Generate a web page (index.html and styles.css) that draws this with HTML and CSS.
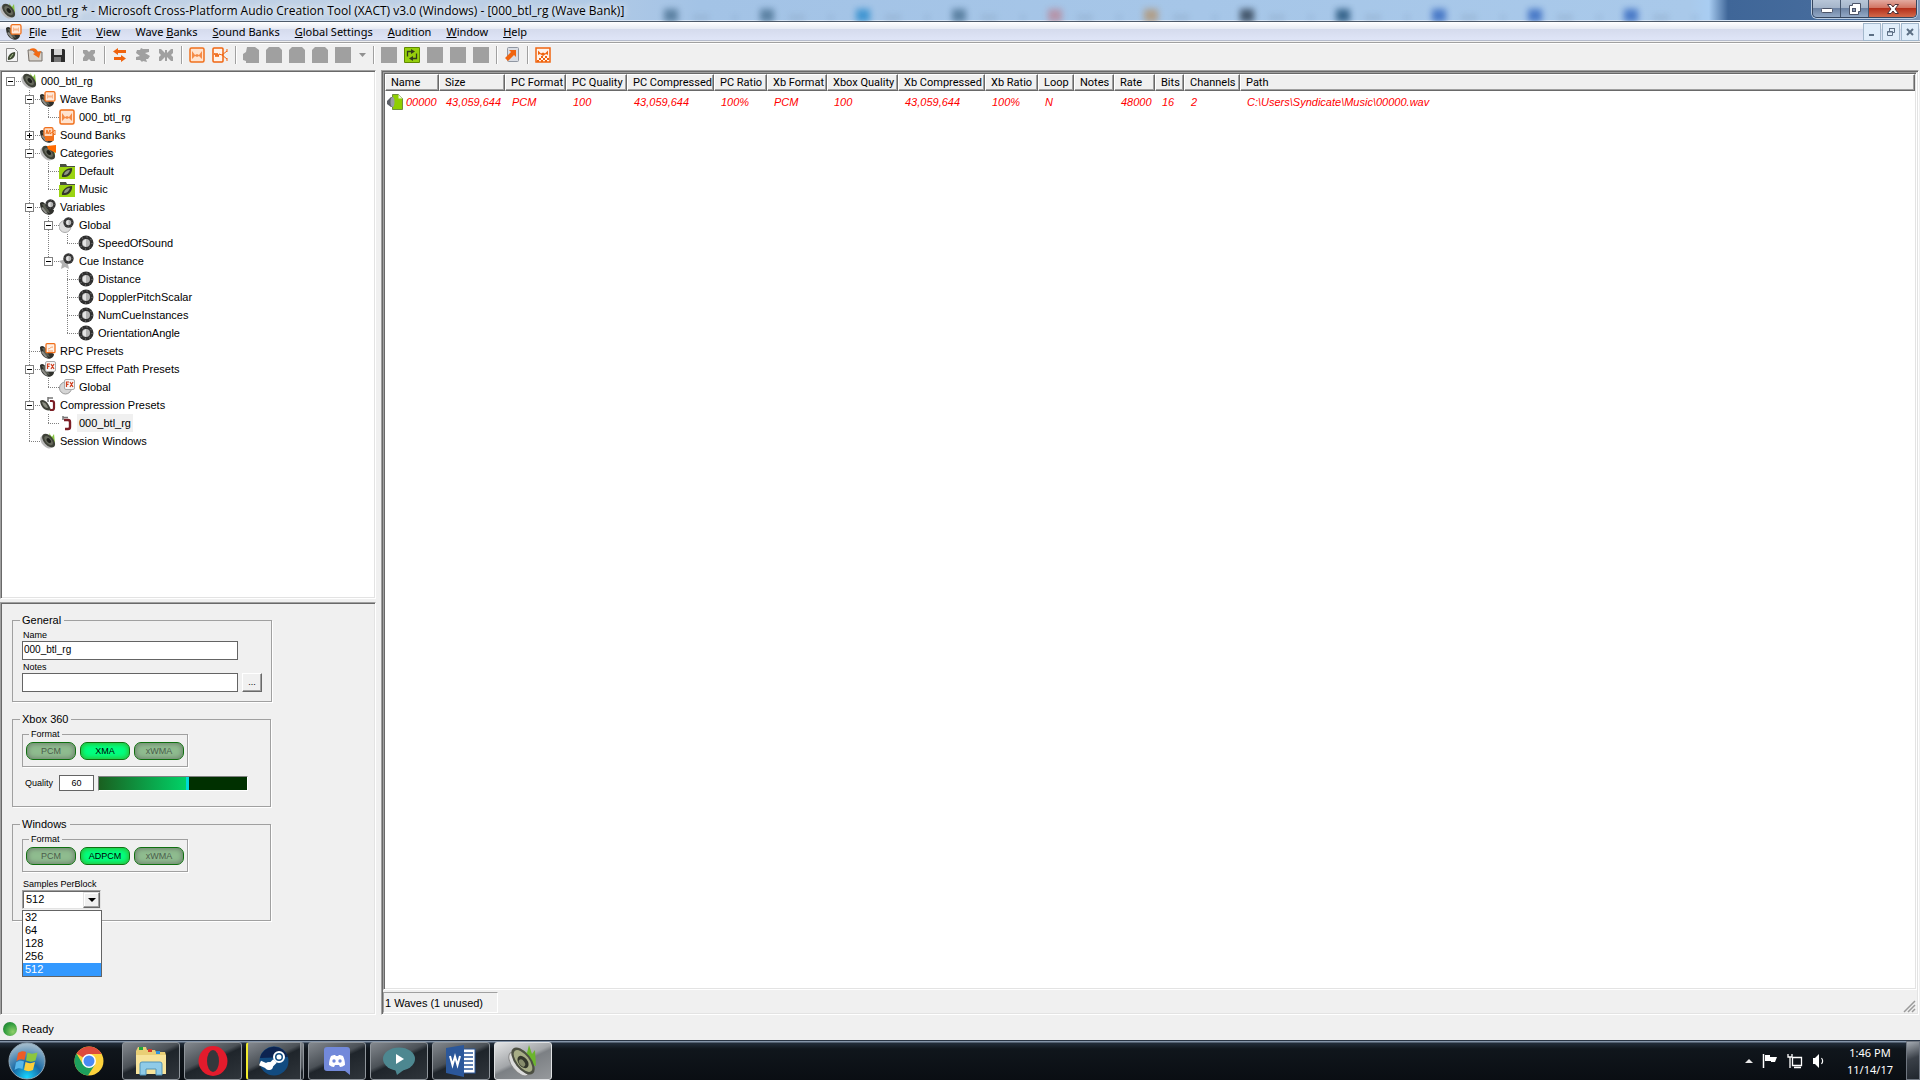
FILE: index.html
```
<!DOCTYPE html>
<html lang="en">
<head>
    <meta charset="UTF-8">
    <meta name="viewport" content="width=device-width, initial-scale=1.0">
    <title>000_btl_rg * - Microsoft Cross-Platform Audio Creation Tool (XACT) v3.0 (Windows)</title>
    <link rel="stylesheet" href="styles.css">
</head>
<body>
    <!-- Shared icon shapes -->
    <svg class="sprite" width="0" height="0">
        <symbol id="speaker" viewBox="0 0 16 16">
            <path d="M9 0l3 4 2-3 1 9-4-2z" fill="#86c440"/>
            <ellipse cx="6.500" cy="9" rx="4.600" ry="7.600" transform="rotate(-42 6.500 9)" fill="#b9b9b9"/>
            <ellipse cx="8.600" cy="7.600" rx="4.600" ry="8.200" transform="rotate(-42 8.600 7.600)" fill="#3f4238"/>
            <ellipse cx="8.600" cy="7.600" rx="2.900" ry="5.600" transform="rotate(-42 8.600 7.600)" fill="#66695c"/>
            <ellipse cx="8.800" cy="7.600" rx="1.800" ry="2.800" transform="rotate(-42 8.800 7.600)" fill="#1d1f1a"/>
        </symbol>
        <symbol id="cone" viewBox="0 0 16 16">
            <path d="M0 4c2-2 4-1 6 2l8 5c0 4-5 6-8 4C2 13 0 9 0 4z" fill="#2f302c"/>
            <path d="M2 5l4 8 4 1-5-9z" fill="#5a5d52"/>
            <path d="M1 9l4 5 3 1-5-7z" fill="#8d8d88"/>
        </symbol>
        <symbol id="wave" viewBox="0 0 16 16">
            <rect x="1" y="1" width="14" height="14" rx="1.500" fill="#ffe3cf" stroke="#f0701c" stroke-width="1.500"/>
            <path d="M3 4v8l3-3 2 1 2-1 3 3V4l-3 4-2-1-2 1z" fill="#f58a45"/>
        </symbol>
        <symbol id="wavebank" viewBox="0 0 16 16">
            <use href="#cone"/>
            <rect x="5" y=".7" width="10" height="9.500" rx="1.500" fill="#ffe9da" stroke="#f0701c" stroke-width="1.300"/>
            <path d="M7 3v5l2-2 1 1 1-1 2 2V3l-2 2-1-1-1 1z" fill="#f9b48a"/>
        </symbol>
        <symbol id="soundbank" viewBox="0 0 16 16">
            <use href="#cone"/>
            <rect x="5" y="6" width="9" height="8" rx="1.500" fill="#f0701c"/>
            <rect x="4" y=".7" width="9" height="9" rx="1.500" fill="#ffd9be" stroke="#f0701c" stroke-width="1.300"/>
            <path d="M6 7l1-4 1 4 2-4v4l5-4v5l-3-3" fill="none" stroke="#f0701c"/>
        </symbol>
        <symbol id="categories" viewBox="0 0 16 16">
            <use href="#speaker"/>
            <path d="M7 1l9-1v8L8 4z" fill="#ff6a00"/>
        </symbol>
        <symbol id="category" viewBox="0 0 16 16">
            <path d="M1 1h6l1 2h8v4H1z" fill="#4a4f40"/>
            <rect x="0" y="4" width="16" height="12" fill="#9bd411"/>
            <path d="M3 14c-1-4 4-9 10-9 1 4-3 9-7 9z" fill="#33372a"/>
            <path d="M5 12c0-3 3-5 6-5-1 3-3 5-6 5z" fill="#8f9584"/>
        </symbol>
        <symbol id="knob" viewBox="0 0 16 16">
            <circle cx="8" cy="8" r="7.500" fill="#303030"/>
            <circle cx="8" cy="8" r="6" fill="none" stroke="#aaa" stroke-width="1" stroke-dasharray=".8 3.900"/>
            <circle cx="8" cy="8" r="4" fill="#b4b4b4"/>
            <path d="M5 6l3-2v8l-3-2z" fill="#e4e4e4"/>
        </symbol>
        <symbol id="variables" viewBox="0 0 16 16">
            <use href="#cone"/>
            <use href="#knob" x="5" y="0" width="11" height="11"/>
        </symbol>
        <symbol id="globalvar" viewBox="0 0 16 16">
            <circle cx="6" cy="9.500" r="6" fill="#ddd" stroke="#aaa"/>
            <use href="#knob" x="4" y="0" width="11" height="11"/>
        </symbol>
        <symbol id="cuevar" viewBox="0 0 16 16">
            <path d="M6 3l2 4 4 1-3 3 1 5-4-2-4 2 1-5-3-3 4-1z" fill="#b2b2b2"/>
            <use href="#knob" x="4" y="0" width="11" height="11"/>
        </symbol>
        <symbol id="rpc" viewBox="0 0 16 16">
            <use href="#cone"/>
            <rect x="6" y=".7" width="9" height="9" rx="1" fill="#fff1e6" stroke="#f0701c" stroke-width="1.300"/>
            <path d="M8 6c2 0 2-2 5-2M8 8h5" fill="none" stroke="#f5a068"/>
        </symbol>
        <symbol id="fx" viewBox="0 0 16 16">
            <rect x="5.500" y=".5" width="10" height="10" rx="1.500" fill="#f6f6f6" stroke="#aaa"/>
            <path d="M7.500 8V3H10M7.500 5.300h2M11 3l3 5M14 3l-3 5" fill="none" stroke="#cf3c1b" stroke-width="1.200"/>
        </symbol>
        <symbol id="dsp" viewBox="0 0 16 16">
            <use href="#cone"/>
            <use href="#fx"/>
        </symbol>
        <symbol id="dspglobal" viewBox="0 0 16 16">
            <circle cx="6.500" cy="9" r="6" fill="#d5d5d5" stroke="#999"/>
            <use href="#fx"/>
        </symbol>
        <symbol id="clamp" viewBox="0 0 16 16">
            <path d="M4 1v4M4 2.500h5" stroke="#777" stroke-width="1.500" fill="none"/>
            <path d="M5 5h4q2 0 2 2v5q0 2-2 2H6" stroke="#7c1f26" stroke-width="2.400" fill="none"/>
        </symbol>
        <symbol id="compression" viewBox="0 0 16 16">
            <path d="M0 4c3-3 8 0 11 9-5 2-10-2-11-9z" fill="#3f4238"/>
            <path d="M2 5c3 0 5 2 6 6-3 0-5-2-6-6z" fill="#8a8d80"/>
            <path d="M8 0v5M8 1h5" stroke="#777" stroke-width="1.500" fill="none"/>
            <path d="M10 4h2q2 0 2 2v5q0 2-2 2h-2" stroke="#7c1f26" stroke-width="2.200" fill="none"/>
        </symbol>
    </svg>

    <header class="titlebar">
        <div class="glass-tabs">
            <i></i><i></i><i></i><i></i><i></i><i></i><i></i><i></i><i></i><i></i><i></i>
        </div>
        <svg class="icon"><use href="#speaker"/></svg>
        <h1 class="title">000_btl_rg * - Microsoft Cross-Platform Audio Creation Tool (XACT) v3.0 (Windows) - [000_btl_rg (Wave Bank)]</h1>
        <div class="window-buttons">
            <button type="button" aria-label="Minimize">
                <svg width="14" height="14" viewBox="0 0 14 14"><rect x="1.500" y="6.500" width="11" height="4" rx="1" fill="#fff" stroke="#4c5468"/></svg>
            </button>
            <button type="button" aria-label="Restore">
                <svg width="14" height="14" viewBox="0 0 14 14"><path d="M4.500 1.500h8v8h-2v3h-9v-9h3z" fill="#fff" stroke="#4c5468"/><rect x="4.500" y="6.500" width="3" height="3" fill="#8c9ab5" stroke="#4c5468"/></svg>
            </button>
            <button type="button" class="close" aria-label="Close">
                <svg width="14" height="14" viewBox="0 0 14 14"><path d="M1.500 2.500h3.500l2 2.500 2-2.500h3.500L9 7l3.500 4.500H9L7 9l-2 2.500H1.500L5 7z" fill="#fff" stroke="#4c3038"/></svg>
            </button>
        </div>
    </header>

    <nav class="menubar">
        <svg class="icon"><use href="#wavebank"/></svg>
        <button type="button"><u>F</u>ile</button>
        <button type="button"><u>E</u>dit</button>
        <button type="button"><u>V</u>iew</button>
        <button type="button">Wave <u>B</u>anks</button>
        <button type="button"><u>S</u>ound Banks</button>
        <button type="button"><u>G</u>lobal Settings</button>
        <button type="button"><u>A</u>udition</button>
        <button type="button"><u>W</u>indow</button>
        <button type="button"><u>H</u>elp</button>
        <div class="mdi-buttons">
            <button type="button" aria-label="Minimize document"><svg width="10" height="10"><path d="M2 8h5" stroke="#5c6f84" stroke-width="2"/></svg></button>
            <button type="button" aria-label="Restore document"><svg width="10" height="10"><path d="M3.500 4V1.500h5v4H7M3 1.500h6M1.500 4.500h5v4h-5zM1 5h6" fill="none" stroke="#5c6f84"/></svg></button>
            <button type="button" aria-label="Close document"><svg width="10" height="10"><path d="M2 2l6 6M8 2L2 8" stroke="#5c6f84" stroke-width="2"/></svg></button>
        </div>
    </nav>

    <div class="toolbar">
        <button type="button" aria-label="New"><svg viewBox="0 0 16 16"><path d="M2.500 1.500h8l3 3v10h-11z" fill="#f4f4f4" stroke="#8b8b8b"/><path d="M4 13c-1-4 3-8 7-8 1 4-2 8-7 8z" fill="#3f4a33"/><path d="M6 11l3-4" stroke="#a9c58e"/></svg></button>
        <button type="button" aria-label="Open"><svg viewBox="0 0 16 16"><path d="M1 3h5l1 2h8v9H2z" fill="#d8d2c9" stroke="#77706a"/><path d="M3 2c4-2 7 0 8 3l3-1-2 7-6-4 2-1C7 4 6 3 3 3z" fill="#f26a12"/></svg></button>
        <button type="button" aria-label="Save"><svg viewBox="0 0 16 16"><path d="M1 2h13l1 1v12H1z" fill="#2c2c2c"/><rect x="4" y="2" width="8" height="6" fill="#d4d4d4"/><rect x="4" y="10" width="7" height="5" fill="#777"/></svg></button>
        <span class="sep"></span>
        <button type="button" disabled aria-label="Delete"><svg viewBox="0 0 16 16"><path d="M2 3h4l2 2 2-2h4v3l-2 2 2 3v3h-4l-2-2-2 2H2v-3l2-3-2-2z" fill="#a0a0a0"/></svg></button>
        <span class="sep"></span>
        <button type="button" aria-label="Swap"><svg viewBox="0 0 16 16"><path d="M6 1v2h8v3H6v2L1 4.500zM9 8v2H2v3h7v2l5-3.500z" fill="#f0640f"/></svg></button>
        <button type="button" disabled aria-label="Sync"><svg viewBox="0 0 16 16"><path d="M6 1l2 1h6v3l-4 1 5 3-2 3h-2l1 3-4-1-1 1-2-2H1v-3l4-1-4-3 1-3h3z" fill="#a0a0a0"/></svg></button>
        <button type="button" disabled aria-label="Merge"><svg viewBox="0 0 16 16"><path d="M1 2h2l4 4V3h2v3l4-4h2v4l-2 2 2 2v4h-2L9 10v4H7v-4l-4 4H1v-4l2-2-2-2z" fill="#a0a0a0"/></svg></button>
        <span class="sep"></span>
        <button type="button" aria-label="New wave bank"><svg><use href="#wave"/></svg></button>
        <button type="button" aria-label="New sound bank"><svg viewBox="0 0 16 16"><rect x="1" y="1" width="10" height="14" rx="1" fill="#fff3ea" stroke="#f0640f" stroke-width="1.500"/><path d="M2 8l1-2 1 4 1-4 1 4 1-3 3 1 5-4M10 8l5 4M15 2v3M15 11v3" fill="none" stroke="#f0640f"/></svg></button>
        <span class="sep"></span>
        <button type="button" disabled aria-label="Play cue"><svg viewBox="0 0 16 16"><path d="M4 0h8l4 3v13H3v-2L0 13V7l3-2z" fill="#a0a0a0"/></svg></button>
        <button type="button" disabled aria-label="Play"><svg viewBox="0 0 16 16"><path d="M3 0h10l3 3v13H0V3z" fill="#a0a0a0"/></svg></button>
        <button type="button" disabled aria-label="Pause"><svg viewBox="0 0 16 16"><path d="M3 0h10l3 3v13H0V3z" fill="#a0a0a0"/></svg></button>
        <button type="button" disabled aria-label="Stop"><svg viewBox="0 0 16 16"><path d="M3 0h10l3 3v13H0V3z" fill="#a0a0a0"/></svg></button>
        <button type="button" disabled aria-label="View"><svg viewBox="0 0 16 16"><path d="M0 0h16v16H0z" fill="#a0a0a0"/></svg></button>
        <button type="button" class="drop" aria-label="View options"><svg viewBox="0 0 16 16"><path d="M5 6h7l-3.500 4z" fill="#909090"/></svg></button>
        <span class="sep"></span>
        <button type="button" disabled aria-label="Audition one"><svg viewBox="0 0 16 16"><path d="M0 0h16v16H0z" fill="#a0a0a0"/></svg></button>
        <button type="button" aria-label="Loop"><svg viewBox="0 0 16 16"><rect width="16" height="16" rx="1" fill="#5f8a00"/><rect x="1" y="1" width="14" height="14" fill="#96cf0c"/><path d="M7 4.500H3.500v5M9 11.500h3.500v-5" fill="none" stroke="#333c1c" stroke-width="1.300"/><path d="M7 2l4 2.500L7 7zM9 9l-4 2.500L9 14z" fill="#333c1c"/></svg></button>
        <button type="button" disabled aria-label="Audition two"><svg viewBox="0 0 16 16"><path d="M0 0h16v16H0z" fill="#a0a0a0"/></svg></button>
        <button type="button" disabled aria-label="Audition three"><svg viewBox="0 0 16 16"><path d="M0 0h16v16H0z" fill="#a0a0a0"/></svg></button>
        <button type="button" disabled aria-label="Audition four"><svg viewBox="0 0 16 16"><path d="M0 0h16v16H0z" fill="#a0a0a0"/></svg></button>
        <span class="sep"></span>
        <button type="button" aria-label="Export"><svg viewBox="0 0 16 16"><rect x="3.500" y=".5" width="11" height="14" rx="1" fill="#d9dde4" stroke="#9097a2"/><path d="M5 3h7v7l-2-2-6 6-3-3 6-6z" fill="#f0640f"/></svg></button>
        <span class="sep"></span>
        <button type="button" aria-label="Build"><svg viewBox="0 0 16 16"><rect x="1" y="1" width="14" height="14" fill="#fff3ea" stroke="#f0640f" stroke-width="1.500"/><path d="M3 3.500l3 3 2-1 2 1 3-3V8l-2-1-3 2-3-2-2 1zM6 9h2v2H6zM10 9h2v2h-2zM4 11h2v2H4zM8 11h2v2H8zM12 11h2v2h-2zM2 13h2v2H2zM6 13h2v2H6zM10 13h2v2h-2z" fill="#f0640f"/></svg></button>
    </div>

    <main class="workspace">
        <div class="sidebar">
            <section class="tree-panel">
                <ul class="tree">
                    <li class="root">
                        <div class="row"><button type="button" class="toggle" aria-label="Collapse"></button><svg class="icon"><use href="#speaker"/></svg><span class="label">000_btl_rg</span></div>
                        <ul>
                            <li>
                                <div class="row"><button type="button" class="toggle" aria-label="Collapse"></button><svg class="icon"><use href="#wavebank"/></svg><span class="label">Wave Banks</span></div>
                                <ul>
                                    <li><div class="row leaf"><svg class="icon"><use href="#wave"/></svg><span class="label">000_btl_rg</span></div></li>
                                </ul>
                            </li>
                            <li>
                                <div class="row"><button type="button" class="toggle plus" aria-label="Expand"></button><svg class="icon"><use href="#soundbank"/></svg><span class="label">Sound Banks</span></div>
                            </li>
                            <li>
                                <div class="row"><button type="button" class="toggle" aria-label="Collapse"></button><svg class="icon"><use href="#categories"/></svg><span class="label">Categories</span></div>
                                <ul>
                                    <li><div class="row leaf"><svg class="icon"><use href="#category"/></svg><span class="label">Default</span></div></li>
                                    <li><div class="row leaf"><svg class="icon"><use href="#category"/></svg><span class="label">Music</span></div></li>
                                </ul>
                            </li>
                            <li>
                                <div class="row"><button type="button" class="toggle" aria-label="Collapse"></button><svg class="icon"><use href="#variables"/></svg><span class="label">Variables</span></div>
                                <ul>
                                    <li>
                                        <div class="row"><button type="button" class="toggle" aria-label="Collapse"></button><svg class="icon"><use href="#globalvar"/></svg><span class="label">Global</span></div>
                                        <ul>
                                            <li><div class="row leaf"><svg class="icon"><use href="#knob"/></svg><span class="label">SpeedOfSound</span></div></li>
                                        </ul>
                                    </li>
                                    <li>
                                        <div class="row"><button type="button" class="toggle" aria-label="Collapse"></button><svg class="icon"><use href="#cuevar"/></svg><span class="label">Cue Instance</span></div>
                                        <ul>
                                            <li><div class="row leaf"><svg class="icon"><use href="#knob"/></svg><span class="label">Distance</span></div></li>
                                            <li><div class="row leaf"><svg class="icon"><use href="#knob"/></svg><span class="label">DopplerPitchScalar</span></div></li>
                                            <li><div class="row leaf"><svg class="icon"><use href="#knob"/></svg><span class="label">NumCueInstances</span></div></li>
                                            <li><div class="row leaf"><svg class="icon"><use href="#knob"/></svg><span class="label">OrientationAngle</span></div></li>
                                        </ul>
                                    </li>
                                </ul>
                            </li>
                            <li>
                                <div class="row leaf"><svg class="icon"><use href="#rpc"/></svg><span class="label">RPC Presets</span></div>
                            </li>
                            <li>
                                <div class="row"><button type="button" class="toggle" aria-label="Collapse"></button><svg class="icon"><use href="#dsp"/></svg><span class="label">DSP Effect Path Presets</span></div>
                                <ul>
                                    <li><div class="row leaf"><svg class="icon"><use href="#dspglobal"/></svg><span class="label">Global</span></div></li>
                                </ul>
                            </li>
                            <li>
                                <div class="row"><button type="button" class="toggle" aria-label="Collapse"></button><svg class="icon"><use href="#compression"/></svg><span class="label">Compression Presets</span></div>
                                <ul>
                                    <li><div class="row leaf"><svg class="icon"><use href="#clamp"/></svg><span class="label selected">000_btl_rg</span></div></li>
                                </ul>
                            </li>
                            <li>
                                <div class="row leaf"><svg class="icon"><use href="#speaker"/></svg><span class="label">Session Windows</span></div>
                            </li>
                        </ul>
                    </li>
                </ul>
            </section>

            <form class="properties">
                <fieldset class="group general">
                    <legend>General</legend>
                    <label for="name">Name</label>
                    <input id="name" class="text" type="text" value="000_btl_rg">
                    <label for="notes">Notes</label>
                    <div class="notes-row">
                        <input id="notes" class="text" type="text">
                        <button type="button" class="browse">...</button>
                    </div>
                </fieldset>

                <fieldset class="group xbox">
                    <legend>Xbox 360</legend>
                    <fieldset class="format">
                        <legend>Format</legend>
                        <button type="button" class="pill">PCM</button>
                        <button type="button" class="pill on">XMA</button>
                        <button type="button" class="pill">xWMA</button>
                    </fieldset>
                    <div class="quality-row">
                        <label for="quality">Quality</label>
                        <input id="quality" class="number" type="text" value="60">
                        <input class="meter" type="range" min="0" max="100" value="60" aria-label="Quality slider">
                    </div>
                </fieldset>

                <fieldset class="group windows">
                    <legend>Windows</legend>
                    <fieldset class="format">
                        <legend>Format</legend>
                        <button type="button" class="pill">PCM</button>
                        <button type="button" class="pill on">ADPCM</button>
                        <button type="button" class="pill">xWMA</button>
                    </fieldset>
                    <label class="block-label" for="samples">Samples PerBlock</label>
                    <div class="combo">
                        <select id="samples">
                            <option>32</option>
                            <option>64</option>
                            <option>128</option>
                            <option>256</option>
                            <option selected>512</option>
                        </select>
                        <span class="combo-arrow"></span>
                        <ul class="combo-list" role="listbox">
                            <li role="option">32</li>
                            <li role="option">64</li>
                            <li role="option">128</li>
                            <li role="option">256</li>
                            <li role="option" aria-selected="true">512</li>
                        </ul>
                    </div>
                </fieldset>
            </form>
        </div>

        <section class="document">
            <div class="wave-list">
                <table>
                    <colgroup>
                        <col class="w-name"><col class="w-size"><col class="w-format"><col class="w-format"><col class="w-comp"><col class="w-ratio"><col class="w-xformat"><col class="w-xquality"><col class="w-comp"><col class="w-ratio"><col class="w-loop"><col class="w-notes"><col class="w-rate"><col class="w-bits"><col class="w-channels"><col>
                    </colgroup>
                    <thead>
                        <tr>
                            <th>Name</th><th>Size</th><th>PC Format</th><th>PC Quality</th><th>PC Compressed</th><th>PC Ratio</th><th>Xb Format</th><th>Xbox Quality</th><th>Xb Compressed</th><th>Xb Ratio</th><th>Loop</th><th>Notes</th><th>Rate</th><th>Bits</th><th>Channels</th><th>Path</th>
                        </tr>
                    </thead>
                    <tbody>
                        <tr>
                            <td class="wave-name"><svg width="16" height="16" viewBox="0 0 16 16"><path d="M5.500.500h6l4 4v11h-10z" fill="#8fce00" stroke="#6f8f3c"/><path d="M11.500.500v4h4z" fill="#eef6dc"/><path d="M0 7l4-4h2v10H4L0 10z" fill="#5c5f66"/><ellipse cx="5.500" cy="8" rx="2" ry="5" fill="#9a9da3"/></svg>00000</td>
                            <td>43,059,644</td><td>PCM</td><td>100</td><td>43,059,644</td><td>100%</td><td>PCM</td><td>100</td><td>43,059,644</td><td>100%</td><td>N</td><td></td><td>48000</td><td>16</td><td>2</td><td>C:\Users\Syndicate\Music\00000.wav</td>
                        </tr>
                    </tbody>
                </table>
            </div>
            <footer class="doc-status">
                <span class="count">1 Waves (1 unused)</span>
                <svg class="grip" width="13" height="13"><path d="M1 12L12 1M5 12l7-7M9 12l3-3" stroke="#9a9a9a" stroke-width="1.500"/></svg>
            </footer>
        </section>
    </main>

    <footer class="statusbar"><span class="led"></span>Ready</footer>

    <div class="taskbar">
        <button type="button" class="start" aria-label="Start">
            <svg width="38" height="38" viewBox="0 0 38 38">
                <defs>
                    <radialGradient id="orb" cx=".5" cy=".95" r=".9"><stop offset="0" stop-color="#19d6ff"/><stop offset=".45" stop-color="#1769a5"/><stop offset="1" stop-color="#9fb9cb"/></radialGradient>
                </defs>
                <circle cx="19" cy="19" r="18" fill="url(#orb)" stroke="#93a9b8"/>
                <path d="M10 11c3-2 6-2 8-1l-1.500 8c-3-1-5-1-8 1z" fill="#ee5c26"/>
                <path d="M19.500 10.500c3 1.500 6 1.500 10 0L27.500 18.500c-3 1.500-6 1.500-9.500 0z" fill="#8cc63e"/>
                <path d="M8 20.500c3-2 5-2 8-1L14.500 27c-3-1-5-1-8 1z" fill="#57b7ea"/>
                <path d="M17.500 20c3 1.500 6 1.500 9.500 0L25 28c-3 1.500-6 1.500-9 0z" fill="#fccf3a"/>
            </svg>
        </button>
        <button type="button" class="pinned" aria-label="Chrome">
            <svg width="30" height="30" viewBox="0 0 30 30">
                <circle cx="15" cy="15" r="14.500" fill="#fdd23c"/>
                <path d="M15 15L2.500 7.600A14.500 14.500 0 0 1 27.600 8H15z" fill="#dd4a3c"/>
                <path d="M2.500 7.600A14.500 14.500 0 0 0 14 29.500L21 18.500 15 15 9 18.500z" fill="#1da05d"/>
                <circle cx="15" cy="15" r="7" fill="#fff"/><circle cx="15" cy="15" r="5.500" fill="#4a8af4"/>
            </svg>
        </button>
        <button type="button" class="task" aria-label="Explorer">
            <svg width="32" height="30" viewBox="0 0 32 30"><path d="M1 5l2-4h8l1 3h8l1 2h9l1 3v19H1z" fill="#e9cf75"/><path d="M1 9h30v19H1z" fill="#f7e39a"/><rect x="4" y="1" width="4" height="3" fill="#22a63c"/><rect x="13" y="3" width="4" height="3" fill="#d43a2a"/><rect x="21" y="5" width="4" height="3" fill="#2f93dc"/><path d="M5 29V18q0-2 2-2h18q2 0 2 2v11h-6v-6H11v6z" fill="#8fcbe8" stroke="#5294b8"/></svg>
        </button>
        <button type="button" class="task" aria-label="Opera">
            <svg width="30" height="32" viewBox="0 0 30 32"><ellipse cx="15" cy="16" rx="14.500" ry="15" fill="#e31b2c"/><ellipse cx="15" cy="16" rx="6" ry="11" fill="#33383c"/></svg>
        </button>
        <button type="button" class="task stacked" aria-label="Steam">
            <svg width="30" height="30" viewBox="0 0 30 30"><circle cx="15" cy="15" r="14.500" fill="#124b80"/><path d="M1 12A14.500 14.500 0 0 1 29 11z" fill="#0c2350"/><path d="M1 17l9 4 6-6" stroke="#fff" stroke-width="5" fill="none"/><circle cx="10" cy="20" r="4" fill="#fff"/><circle cx="20" cy="11" r="5" fill="#124b80" stroke="#fff" stroke-width="2"/><circle cx="20" cy="11" r="2.500" fill="#fff"/></svg>
        </button>
        <button type="button" class="task" aria-label="Discord">
            <svg width="28" height="30" viewBox="0 0 28 30"><path d="M4 1h20q3 0 3 3v25l-5-4H4q-3 0-3-3V4q0-3 3-3z" fill="#7289da"/><path d="M6 19c0-4 1-7 2-9 2-1 3-1 4-1l1 1h2l1-1c1 0 2 0 4 1 1 2 2 5 2 9-2 1-3 2-5 2l-1-2h-4l-1 2c-2 0-3-1-5-2z" fill="#fff"/><circle cx="11" cy="15" r="1.700" fill="#7289da"/><circle cx="17" cy="15" r="1.700" fill="#7289da"/></svg>
        </button>
        <button type="button" class="task" aria-label="Player">
            <svg width="34" height="28" viewBox="0 0 34 28"><ellipse cx="17" cy="12" rx="16" ry="11.500" fill="#4d8790"/><path d="M13 22l2 6 8-6z" fill="#4d8790"/><path d="M14 7l8 5-8 5z" fill="#fff"/></svg>
        </button>
        <button type="button" class="task" aria-label="Word">
            <svg width="30" height="32" viewBox="0 0 30 32"><rect x="16" y="4" width="13" height="24" fill="#fff" stroke="#2b579a"/><path d="M18 8h9M18 12h9M18 16h9M18 20h9M18 24h9" stroke="#2b579a" stroke-width="1.500"/><path d="M0 3l18-3v32L0 28z" fill="#2b579a"/><path d="M4 11l2.500 9L9 11.500 11.500 20 14 11" fill="none" stroke="#fff" stroke-width="2"/></svg>
        </button>
        <button type="button" class="task active" aria-label="XACT">
            <svg width="30" height="32" viewBox="0 0 30 32"><path d="M15 5l4 3 2-8 3 9 3-4 1 16-6-2z" fill="#6bb52c"/><ellipse cx="11" cy="19" rx="7" ry="14" transform="rotate(-38 11 19)" fill="#dcdcdc" stroke="#888"/><ellipse cx="15" cy="16" rx="8" ry="16" transform="rotate(-38 15 16)" fill="#4c4f42"/><ellipse cx="15" cy="16" rx="6" ry="13" transform="rotate(-38 15 16)" fill="#a7ad86"/><ellipse cx="15" cy="17" rx="4.500" ry="7" transform="rotate(-38 15 17)" fill="#33362b"/><ellipse cx="14" cy="18" rx="2.500" ry="4" transform="rotate(-38 14 18)" fill="#878c6c"/></svg>
        </button>

        <div class="tray">
            <svg width="8" height="16" viewBox="0 0 8 16"><path d="M0 10h8L4 6z" fill="#e8e8e8"/></svg>
            <svg width="16" height="16" viewBox="0 0 16 16"><path d="M1.500 1v14" stroke="#fff" stroke-width="1.500"/><path d="M3 2h5v2h7l-2 5H9V8H3z" fill="#fff"/></svg>
            <svg width="16" height="16" viewBox="0 0 16 16"><path d="M5.500 4.500h9v8h-9zM7 14.500h7M1 1v3h4V1M3 4v11" fill="none" stroke="#fff" stroke-width="1.300"/></svg>
            <svg width="14" height="16" viewBox="0 0 14 16"><path d="M1 5h2l4-4v14l-4-4H1z" fill="#fff"/><path d="M9.500 5c1.500 2 1.500 4 0 6" stroke="#fff" fill="none" stroke-width="1.200"/></svg>
            <div class="clock"><span>1:46 PM</span><span>11/14/17</span></div>
            <button type="button" class="show-desktop" aria-label="Show desktop"></button>
        </div>
    </div>
</body>
</html>
```
FILE: styles.css
```
* {
    margin: 0;
    padding: 0;
    box-sizing: border-box;
}

body {
    display: flex;
    flex-direction: column;
    height: 100vh;
    overflow: hidden;
    background: #f0f0f0;
    color: #000;
    font-family: "Liberation Sans", Arial, sans-serif;
    font-size: 11px;
    line-height: 14px;
}

button,
input,
select {
    font: inherit;
    color: inherit;
}

button {
    background: none;
    border: none;
}

ul {
    list-style: none;
}

.sprite {
    display: block;
    position: absolute;
}

.icon {
    width: 16px;
    height: 16px;
    flex: none;
}

/* Title bar */
.titlebar {
    position: relative;
    display: flex;
    align-items: center;
    height: 22px;
    flex: none;
    gap: 5px;
    overflow: hidden;
    background: linear-gradient(90deg, #c3d3e6 0, #bccfe5 500px, #a3c3e6 700px, #a9c9ea 88%, #a9cdf2 89%, #3f6698 90%, #4a6f9f 98%, #7f9bbd 100%);
    border-bottom: 1px solid #4d5a6b;
    box-shadow: inset 0 -1px 0 #d5e3f3;
}

.titlebar .icon {
    z-index: 1;
}

.title {
    z-index: 1;
    font-family: "Open Sans", "Noto Sans", sans-serif;
    font-size: 12px;
    font-weight: 400;
    white-space: nowrap;
    text-shadow: 0 0 6px #fff, 0 0 8px #fff;
}

/* Browser tabs seen through the glass */
.glass-tabs {
    position: absolute;
    top: 9px;
    left: 664px;
    right: 200px;
    display: flex;
    gap: 82px;
    filter: blur(3px);
    opacity: .8;
}

.glass-tabs i {
    width: 14px;
    height: 13px;
    flex: none;
    background: #4c7394;
    box-shadow: 26px 2px 0 -4px #90acca, 34px 2px 0 -4px #90acca, 64px 2px 0 -5px #819fc0;
}

.glass-tabs i:nth-child(3) { background: #2b8ccd; }
.glass-tabs i:nth-child(5) { background: #b98a9c; }
.glass-tabs i:nth-child(6) { background: #b39674; }
.glass-tabs i:nth-child(7) { background: #2e3e50; }
.glass-tabs i:nth-child(8) { background: #1f5078; }
.glass-tabs i:nth-child(n+9) { background: #3468c0; }

.window-buttons {
    display: flex;
    align-self: flex-start;
    margin-left: auto;
    margin-right: 3px;
    height: 18px;
    border: 1px solid #36465e;
    border-top: none;
    border-radius: 0 0 5px 5px;
    box-shadow: 0 0 0 1px #b9cbe0;
    overflow: hidden;
    z-index: 1;
}

.window-buttons button {
    display: flex;
    align-items: center;
    justify-content: center;
    width: 28px;
    background: linear-gradient(#b8c6d8, #a5b5ca 45%, #6d83a3 50%, #93a9c6);
    border-right: 1px solid #46566e;
}

.window-buttons .close {
    width: 47px;
    border-right: none;
    background: linear-gradient(#e3aaa0, #d27563 45%, #b5301b 50%, #d2694a);
}

/* Menu bar */
.menubar {
    display: flex;
    align-items: center;
    height: 20px;
    flex: none;
    padding-left: 6px;
    background: linear-gradient(#fff 0, #e6eaf4 7px, #d5dbed 7px, #dfe5f7 18px, #b6bccc 18px, #b6bccc 19px, #f0f0f0 19px);
    font-family: "Noto Sans", "Open Sans", sans-serif;
}

.menubar > button {
    padding: 0 8px 0 7px;
    white-space: nowrap;
}

.mdi-buttons {
    display: flex;
    gap: 1px;
    margin-left: auto;
    margin-right: 1px;
}

.mdi-buttons button {
    display: flex;
    align-items: center;
    justify-content: center;
    width: 18px;
    height: 18px;
    background: #e0edfa;
    border: 1px solid #a3b8cc;
}

/* Toolbar */
.toolbar {
    display: flex;
    align-items: center;
    height: 28px;
    flex: none;
    padding-bottom: 3px;
    border-top: 1px solid #a0a0a0;
    box-shadow: inset 0 1px 0 #fff;
}

.toolbar button {
    display: flex;
    align-items: center;
    justify-content: center;
    width: 23px;
    height: 22px;
}

.toolbar .drop {
    width: 15px;
}

.toolbar svg {
    width: 16px;
    height: 16px;
    flex: none;
}

.sep {
    width: 8px;
    height: 18px;
    background: linear-gradient(90deg, transparent 4px, #a0a0a0 4px, #a0a0a0 5px, #fff 5px, #fff 6px, transparent 6px);
}

/* Workspace */
.workspace {
    display: flex;
    flex: 1;
    min-height: 0;
    gap: 5px;
    padding-right: 1px;
}

.sidebar {
    display: flex;
    flex-direction: column;
    gap: 3px;
    width: 376px;
    flex: none;
}

.tree-panel,
.properties,
.document {
    border: 1px solid;
    border-color: #a0a0a0 #fff #fff #a0a0a0;
    box-shadow: inset 1px 1px 0 #696969, inset -1px -1px 0 #e3e3e3;
}

.tree-panel {
    flex: 1;
    min-height: 0;
    overflow: hidden;
    background: #fff;
    padding: 1px 2px 2px 5px;
}

.tree ul {
    margin-left: 19px;
}

.tree li {
    background: repeating-linear-gradient(#808080 0, #808080 1px, transparent 1px, transparent 2px) 4px 0 / 1px 100% no-repeat;
}

.tree li:last-child {
    background-size: 1px 9px;
}

.tree .root {
    background: none;
}

.row {
    display: flex;
    align-items: center;
    height: 18px;
    background: repeating-linear-gradient(90deg, #808080 0, #808080 1px, transparent 1px, transparent 2px) 4px 9px / 11px 1px no-repeat;
}

.leaf {
    padding-left: 15px;
}

.toggle {
    width: 9px;
    height: 9px;
    margin-right: 6px;
    border: 1px solid #808080;
    background: linear-gradient(#000, #000) center / 5px 1px no-repeat #fff;
}

.toggle.plus {
    background: linear-gradient(#000, #000) center / 5px 1px no-repeat, linear-gradient(#000, #000) center / 1px 5px no-repeat #fff;
}

.label {
    margin-left: 2px;
    padding: 1px 2px;
    line-height: 16px;
    white-space: nowrap;
}

.label.selected {
    background: #f0f0f0;
}

/* Properties */
.properties {
    display: flex;
    flex-direction: column;
    align-items: flex-start;
    gap: 10px;
    padding: 10px 10px 93px 11px;
    font-size: 9px;
    line-height: 11px;
}

.group {
    width: 259px;
    padding: 3px 9px 9px;
    border: 1px solid #a0a0a0;
    box-shadow: 1px 1px 0 #fff;
}

.group.xbox {
    padding-bottom: 15px;
}

.group.windows {
    padding-bottom: 11px;
}

.group > legend {
    margin-left: -2px;
    padding: 0 3px 0 2px;
    font-size: 11px;
    line-height: 14px;
}

.group label {
    display: block;
    padding-left: 1px;
}

.text,
.number {
    display: block;
    background: #fff;
    border: 1px solid #646464;
}

.text {
    width: 216px;
    height: 19px;
    padding: 0 1px 2px;
    font-size: 10px;
}

.text + label {
    margin-top: 2px;
}

.notes-row {
    display: flex;
    gap: 4px;
}

.browse {
    width: 20px;
    height: 19px;
    border: 1px solid;
    border-color: #fff #696969 #696969 #fff;
    box-shadow: inset -1px -1px 0 #a0a0a0;
}

.format {
    display: flex;
    gap: 4px;
    width: 165px;
    padding: 2px 3px 6px;
    border: 1px solid #a0a0a0;
    box-shadow: 1px 1px 0 #fff;
}

.format legend {
    margin-left: 3px;
    padding: 0 2px;
}

.pill {
    width: 50px;
    height: 18px;
    border: 1px solid #107010;
    border-radius: 7px;
    background: #8fbc8f;
    box-shadow: inset 0 0 5px 1px #6f806f;
    color: #4c5c4c;
}

.pill.on {
    background: #00ff7f;
    box-shadow: inset 0 0 5px 1px #30b830;
    color: #000;
}

.quality-row {
    display: flex;
    align-items: center;
    gap: 4px;
    height: 16px;
    margin-top: 8px;
    padding-left: 2px;
}

.quality-row label {
    width: 31px;
}

.number {
    width: 35px;
    height: 16px;
    text-align: center;
}

.meter {
    appearance: none;
    width: 150px;
    height: 15px;
    border: 1px solid;
    border-color: #808080 #fff #fff #808080;
    background: linear-gradient(90deg, #1a6020, #00d468 60%, #003000 60%);
}

.meter::-webkit-slider-thumb {
    appearance: none;
    width: 3px;
    height: 13px;
    background: #00d8d8;
}

.group .block-label {
    margin-top: 7px;
}

.combo {
    position: relative;
    width: 79px;
    font-size: 11px;
}

.combo select {
    display: block;
    appearance: none;
    width: 100%;
    height: 19px;
    padding-left: 3px;
    background: #fff;
    border: 1px solid;
    border-color: #a0a0a0 #e3e3e3 #e3e3e3 #a0a0a0;
    box-shadow: inset 1px 1px 0 #696969;
    border-radius: 0;
}

.combo-arrow {
    position: absolute;
    top: 2px;
    right: 1px;
    width: 17px;
    height: 16px;
    background: #f0f0f0;
    border: 1px solid;
    border-color: #e3e3e3 #696969 #696969 #e3e3e3;
    box-shadow: inset -1px -1px 0 #a0a0a0, inset 1px 1px 0 #fff;
    pointer-events: none;
}

.combo-arrow::after {
    content: '';
    position: absolute;
    top: 5px;
    left: 4px;
    border: 4px solid transparent;
    border-top-color: #000;
    border-bottom: none;
}

.combo-list {
    position: absolute;
    top: 20px;
    left: 0;
    width: 80px;
    background: #fff;
    border: 1px solid #646464;
    line-height: 13px;
    z-index: 2;
}

.combo-list li {
    padding-left: 2px;
}

.combo-list [aria-selected] {
    background: #3399ff;
    color: #fff;
}

/* Wave list */
.document {
    display: flex;
    flex-direction: column;
    flex: 1;
    min-width: 0;
    padding: 1px;
}

.wave-list {
    flex: 1;
    background: #fff;
    border: 1px solid;
    border-color: #a0a0a0 #fff #fff #a0a0a0;
    box-shadow: inset 1px 1px 0 #696969, inset -1px -1px 0 #e3e3e3;
    padding: 1px;
}

table {
    width: 100%;
    table-layout: fixed;
    border-collapse: separate;
    border-spacing: 0;
}

.w-name { width: 54px; }
.w-size { width: 66px; }
.w-format { width: 61px; }
.w-comp { width: 87px; }
.w-ratio { width: 53px; }
.w-xformat { width: 60px; }
.w-xquality { width: 71px; }
.w-loop { width: 36px; }
.w-notes { width: 40px; }
.w-rate { width: 41px; }
.w-bits { width: 29px; }
.w-channels { width: 56px; }

th {
    height: 17px;
    padding: 0 0 0 5px;
    background: #f0f0f0;
    border: 1px solid;
    border-color: #fff #696969 #696969 #fff;
    box-shadow: inset -1px -1px 0 #a0a0a0;
    font-family: Roboto, "Liberation Sans", sans-serif;
    font-weight: 400;
    text-align: left;
    white-space: nowrap;
}

td {
    height: 20px;
    padding: 1px 0 0 7px;
    color: #f00;
    font-style: italic;
    white-space: nowrap;
}

.wave-name {
    display: flex;
    align-items: center;
    gap: 3px;
    padding-left: 2px;
}

.doc-status {
    display: flex;
    align-items: flex-end;
    justify-content: space-between;
    height: 23px;
    flex: none;
}

.count {
    width: 115px;
    height: 21px;
    padding: 2px 1px;
    line-height: 16px;
    border: 1px solid;
    border-color: #a0a0a0 #fff #fff #a0a0a0;
}

.grip {
    margin-right: 1px;
}

/* Status bar */
.statusbar {
    display: flex;
    align-items: center;
    gap: 5px;
    height: 25px;
    flex: none;
    padding: 3px 0 0 3px;
}

.led {
    width: 14px;
    height: 14px;
    border-radius: 50%;
    background: radial-gradient(circle at 70% 70%, #8fd06a, #2e9a3c 60%, #1d6f30);
}

/* Taskbar */
.taskbar {
    display: flex;
    align-items: center;
    height: 40px;
    flex: none;
    gap: 4px;
    padding-left: 8px;
    border-top: 1px solid #2a3646;
    background: linear-gradient(#8494a8 0, #8494a8 1px, #222d3a 2px, #10161c 8px, #0a0e13 100%);
}

.taskbar button {
    display: flex;
    align-items: center;
    justify-content: center;
    flex: none;
}

.start {
    width: 38px;
}

.taskbar .pinned {
    width: 68px;
    padding-left: 10px;
}

.task {
    width: 58px;
    height: 38px;
    border: 1px solid #8f959b;
    border-radius: 3px;
    background: linear-gradient(155deg, #83888e 0, #4b5157 42%, #1f252b 50%, #2f353b 100%);
}

.taskbar .stacked {
    border-left: 2px solid #f3ec2c;
    border-right: 4px double #8f959b;
}

.taskbar .active {
    border-color: #e0e2e4;
    background: linear-gradient(155deg, #e3e4e5 0, #a3a6a9 45%, #7c8084 52%, #96999c 100%);
}

.tray {
    display: flex;
    align-items: center;
    height: 100%;
    gap: 9px;
    margin-left: auto;
}

.clock {
    display: flex;
    flex-direction: column;
    align-items: center;
    width: 54px;
    margin-left: 8px;
    color: #fff;
    font-family: "Noto Sans", "Open Sans", sans-serif;
    line-height: 17px;
}

.show-desktop {
    width: 14px;
    height: 100%;
    border: 1px solid #6f7680;
    background: linear-gradient(160deg, #a5abb2, #3a4048 45%, #20262d);
}
```
